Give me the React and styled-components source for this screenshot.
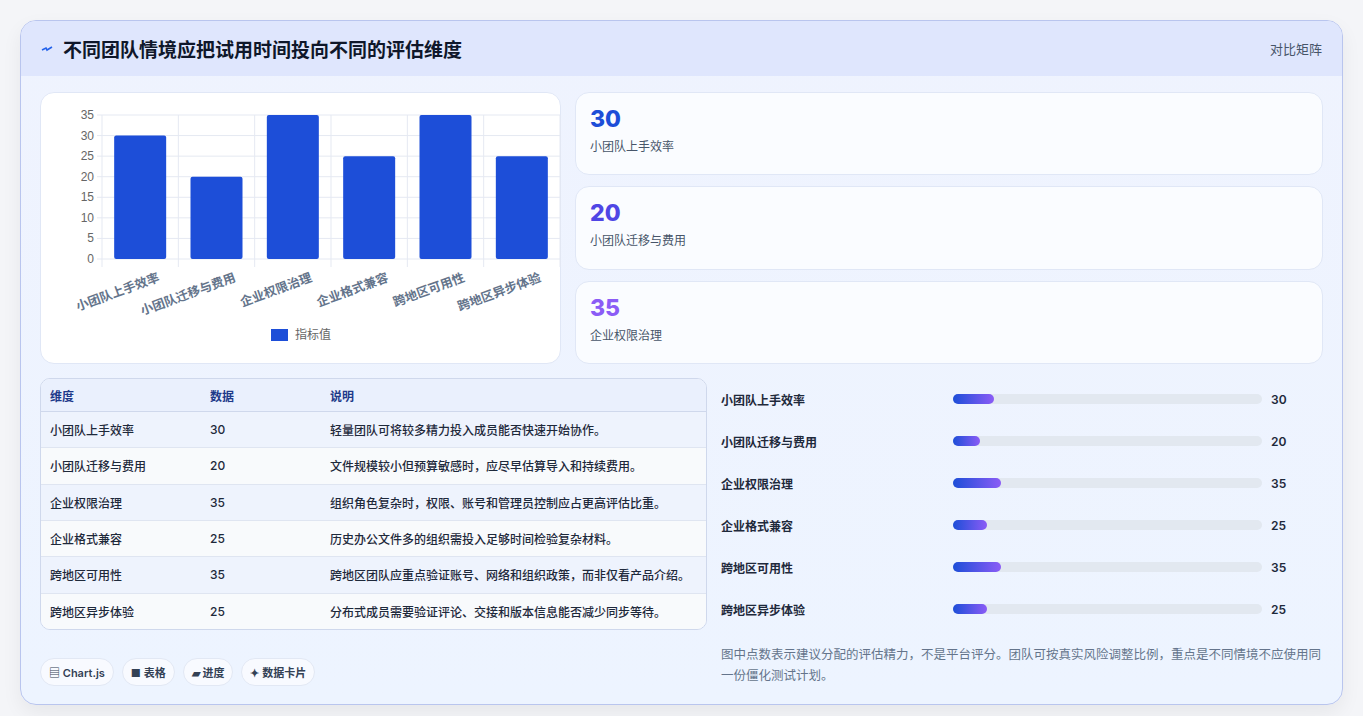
import React from 'react';
import styled, { createGlobalStyle } from 'styled-components';

const data = [
  { name: '小团队上手效率', v: 30, note: '轻量团队可将较多精力投入成员能否快速开始协作。' },
  { name: '小团队迁移与费用', v: 20, note: '文件规模较小但预算敏感时，应尽早估算导入和持续费用。' },
  { name: '企业权限治理', v: 35, note: '组织角色复杂时，权限、账号和管理员控制应占更高评估比重。' },
  { name: '企业格式兼容', v: 25, note: '历史办公文件多的组织需投入足够时间检验复杂材料。' },
  { name: '跨地区可用性', v: 35, note: '跨地区团队应重点验证账号、网络和组织政策，而非仅看产品介绍。' },
  { name: '跨地区异步体验', v: 25, note: '分布式成员需要验证评论、交接和版本信息能否减少同步等待。' },
];

const Global = createGlobalStyle`
  body { margin: 0; background: #f4f5f8; font-family: Inter, "Noto Sans CJK SC", sans-serif; color: #1e293b; }
`;

const Page = styled.div`
  padding: 20px 20px 22px 20px;
`;
const Frame = styled.div`
  border: 1px solid #b9c5ee;
  border-radius: 16px;
  overflow: hidden;
  background: linear-gradient(180deg, #eff3fe 0%, #edf4ff 100%);
  box-shadow: 0 8px 20px rgba(0,0,0,0.06);
`;
const Header = styled.div`
  height: 55px;
  background: #dfe6fd;
  display: flex;
  align-items: center;
  justify-content: space-between;
  padding: 0 20px;
`;
const Title = styled.h1`
  margin: 0;
  font-size: 19px;
  font-weight: 700;
  color: #0f172a;
  display: flex;
  align-items: center;
  gap: 10px;
`;
const Tag = styled.span`
  font-size: 13px;
  color: #475569;
`;
const Body = styled.div`
  padding: 16px 19px 18px 19px;
  display: grid;
  grid-template-columns: 521px 1fr;
  gap: 14px 14px;
`;
const Card = styled.div`
  background: #fff;
  border: 1px solid #e0e7f6;
  border-radius: 14px;
`;
const ChartCard = styled(Card)`
  height: 270px;
`;
const Stats = styled.div`
  display: grid;
  grid-template-rows: repeat(3, 1fr);
  gap: 11px;
`;
const Stat = styled(Card)`
  background: #fafcff;
  padding: 12px 14px;
`;
const StatNum = styled.div`
  font-size: 23px;
  font-weight: 800;
  color: ${p => p.$c};
  line-height: 28px;
`;
const StatLabel = styled.div`
  font-size: 12px;
  color: #475569;
  margin-top: 4px;
`;
const Lower = styled.div`
  grid-column: 1 / -1;
  display: grid;
  grid-template-columns: 667px 1fr;
  gap: 14px;
`;
const Table = styled.table`
  width: 100%;
  border-collapse: separate;
  border-spacing: 0;
  border: 1px solid #cfd8ec;
  border-radius: 10px;
  overflow: hidden;
  font-size: 12px;
  background: #f8faff;
`;
const Th = styled.th`
  text-align: left;
  font-weight: 600;
  color: #1e3a8a;
  background: #eaf0fd;
  height: 32px;
  padding: 0 9px;
  border-bottom: 1px solid #cfd8ec;
`;
const Td = styled.td`
  height: 34px;
  padding: 0 9px;
  color: #1e293b;
  font-weight: 500;
  background: ${p => (p.$odd ? '#f8fafc' : '#eef3fd')};
  border-bottom: ${p => (p.$last ? 'none' : '1px solid #dfe5f1')};
`;
const Bars = styled.div`
  display: grid;
  grid-template-rows: repeat(6, 42px);
  padding-top: 0px;
`;
const BarRow = styled.div`
  display: grid;
  grid-template-columns: 223px 309px 1fr;
  align-items: center;
  gap: 9px;
  font-size: 12px;
  font-weight: 600;
  color: #1e293b;
`;
const Track = styled.div`
  height: 10px;
  border-radius: 5px;
  background: #e2e8f0;
`;
const Fill = styled.div`
  height: 100%;
  border-radius: 5px;
  background: linear-gradient(90deg, #1d4ed8, #8b5cf6);
`;
const Chips = styled.div`
  display: flex;
  gap: 8px;
  align-items: flex-end;
`;
const Chip = styled.span`
  font-size: 11px;
  font-weight: 600;
  color: #334155;
  background: #f8faff;
  border: 1px solid #e2e8f4;
  border-radius: 14px;
  height: 26px;
  padding: 0 8px;
  display: flex;
  align-items: center;
`;
const Note = styled.p`
  margin: 0;
  font-size: 12.5px;
  line-height: 21px;
  color: #64748b;
  align-self: end;
`;

function Chart() {
  const x0 = 61, x1 = 519, y0 = 22, y1 = 166, max = 35;
  const w = (x1 - x0) / 6;
  const ticks = [0, 5, 10, 15, 20, 25, 30, 35];
  return (
    <svg width="521" height="270" style={{ display: 'block' }}>
      {ticks.map(t => {
        const y = y1 - (t / max) * (y1 - y0);
        return (
          <g key={t}>
            <line x1={x0 - 5} x2={x1} y1={y} y2={y} stroke="#e5e9f2" />
            <text x={x0 - 8} y={y + 4} fontSize="12" fill="#666" textAnchor="end" fontFamily="Liberation Sans, sans-serif">{t}</text>
          </g>
        );
      })}
      {[0, 1, 2, 3, 4, 5, 6].map(i => (
        <line key={i} x1={x0 + i * w} x2={x0 + i * w} y1={y0} y2={y1 + 8} stroke="#e5e9f2" />
      ))}
      {data.map((d, i) => {
        const h = (d.v / max) * (y1 - y0);
        const cx = x0 + i * w + w / 2;
        return (
          <g key={d.name}>
            <rect x={cx - 26} y={y1 - h} width={52} height={h} rx={2} fill="#1d4ed8" />
            <text transform={`translate(${cx + 20},${y1 + 22}) rotate(-20)`} fontSize="12.5" fontWeight="600" fill="#64748b" textAnchor="end">{d.name}</text>
          </g>
        );
      })}
      <rect x={230} y={236} width={17} height={12} fill="#1d4ed8" />
      <text x={254} y={246} fontSize="12" fill="#666">指标值</text>
    </svg>
  );
}

export default function App() {
  const colors = ['#1d4ed8', '#4f46e5', '#8b5cf6'];
  return (
    <Page>
      <Global />
      <Frame>
        <Header>
          <Title>
            <svg width="12" height="10" viewBox="0 0 12 10"><path d="M1 6 L5 4 L6 6 L11 3" stroke="#2563eb" strokeWidth="1.6" fill="none" /></svg>
            不同团队情境应把试用时间投向不同的评估维度
          </Title>
          <Tag>对比矩阵</Tag>
        </Header>
        <Body>
          <ChartCard><Chart /></ChartCard>
          <Stats>
            {data.slice(0, 3).map((d, i) => (
              <Stat key={d.name}>
                <StatNum $c={colors[i]}>{d.v}</StatNum>
                <StatLabel>{d.name}</StatLabel>
              </Stat>
            ))}
          </Stats>
          <Lower>
            <Table>
              <thead>
                <tr><Th style={{ width: 142 }}>维度</Th><Th style={{ width: 102 }}>数据</Th><Th>说明</Th></tr>
              </thead>
              <tbody>
                {data.map((d, i) => (
                  <tr key={d.name}>
                    <Td $odd={i % 2 === 1} $last={i === 5}>{d.name}</Td>
                    <Td $odd={i % 2 === 1} $last={i === 5}>{d.v}</Td>
                    <Td $odd={i % 2 === 1} $last={i === 5}>{d.note}</Td>
                  </tr>
                ))}
              </tbody>
            </Table>
            <Bars>
              {data.map(d => (
                <BarRow key={d.name}>
                  <span>{d.name}</span>
                  <Track><Fill style={{ width: `${(d.v / 225) * 100}%` }} /></Track>
                  <span>{d.v}</span>
                </BarRow>
              ))}
            </Bars>
            <Chips>
              <Chip>▤ Chart.js</Chip>
              <Chip>■ 表格</Chip>
              <Chip>▰ 进度</Chip>
              <Chip>✦ 数据卡片</Chip>
            </Chips>
            <Note>图中点数表示建议分配的评估精力，不是平台评分。团队可按真实风险调整比例，重点是不同情境不应使用同一份僵化测试计划。</Note>
          </Lower>
        </Body>
      </Frame>
    </Page>
  );
}
